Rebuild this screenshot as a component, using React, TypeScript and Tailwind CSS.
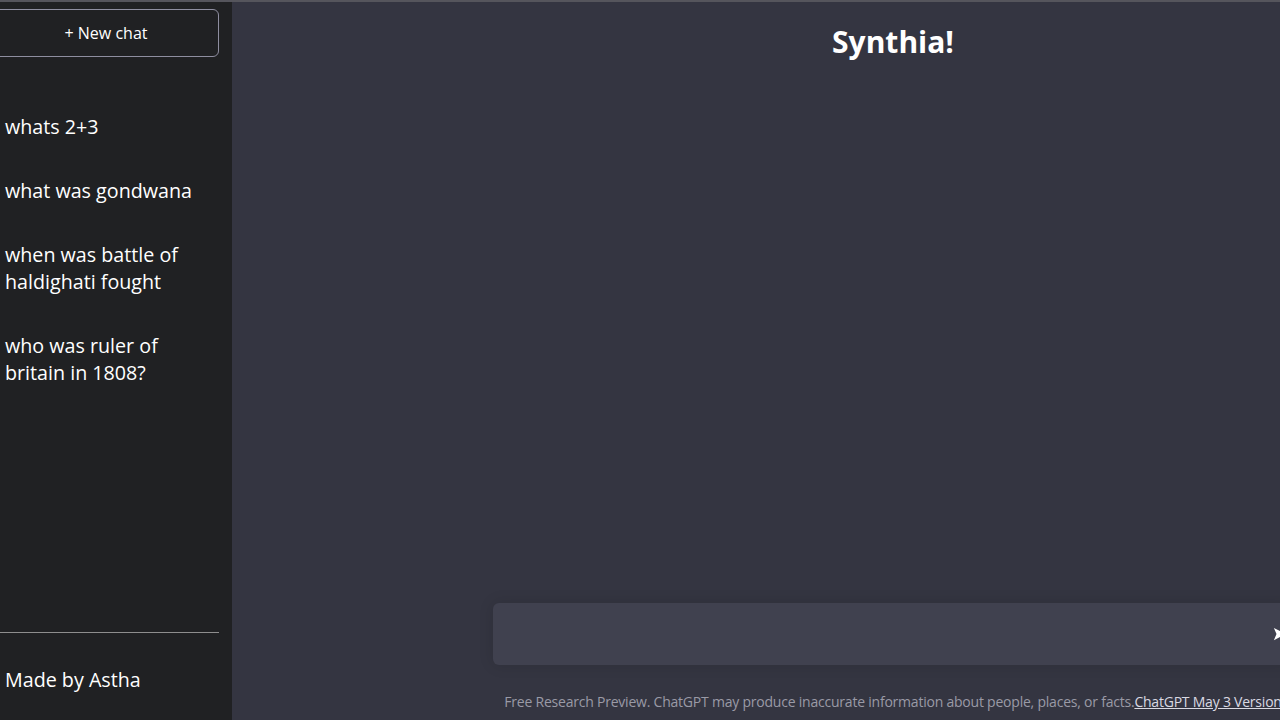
const chats = [
  "whats 2+3",
  "what was gondwana",
  "when was battle of haldighati fought",
  "who was ruler of britain in 1808?",
];

export default function App() {
  return (
    <div className="flex h-[720px] w-full overflow-hidden border-t-2 border-[#55555c] bg-[#343541] font-['Open_Sans',sans-serif] text-white">
      {/* Sidebar */}
      <aside className="flex w-[232px] shrink-0 flex-col overflow-hidden bg-[#202123]">
        <div className="-ml-[7px] mr-[13px] flex h-full flex-col">
          <button className="mt-[7px] h-[48px] w-full rounded-md border border-[#8e8ea0] text-[16px] text-white">
            + New chat
          </button>

          <div className="mt-[56px] flex flex-col gap-[37px] pl-[12px] pr-2">
            {chats.map((c) => (
              <p key={c} className="text-[19.7px] leading-[27px] text-white">
                {c}
              </p>
            ))}
          </div>

          <div className="mt-auto border-t border-[#8e8e8e]" />
          <p className="mb-[27px] mt-[33px] pl-[12px] text-[19.7px] leading-[27px]">Made by Astha</p>
        </div>
      </aside>

      {/* Main */}
      <main className="flex flex-1 overflow-hidden">
        <div className="flex w-[1322px] shrink-0 flex-col items-center">
          <h1 className="mt-[20px] text-[30px] font-bold leading-[40px]">Synthia!</h1>

          <div className="flex-1" />

          <div className="flex h-[62px] w-[800px] items-center justify-end rounded-md bg-[#40414f] pr-[6px] shadow-[0_0_15px_rgba(0,0,0,0.12)]">
            <svg width="14" height="14" viewBox="0 0 16 16" fill="white">
              <path d="M1 1 L15 8 L1 15 L4 8 Z" />
            </svg>
          </div>

          <p className="mb-[8px] mt-[27px] whitespace-nowrap text-[14px] leading-[20px] tracking-[-0.22px] text-[#9a9aa6]">
            Free Research Preview. ChatGPT may produce inaccurate information about people, places, or facts.
            <a className="text-[#d9d9e3] underline">ChatGPT May 3 Version</a>
          </p>
        </div>
      </main>
    </div>
  );
}
